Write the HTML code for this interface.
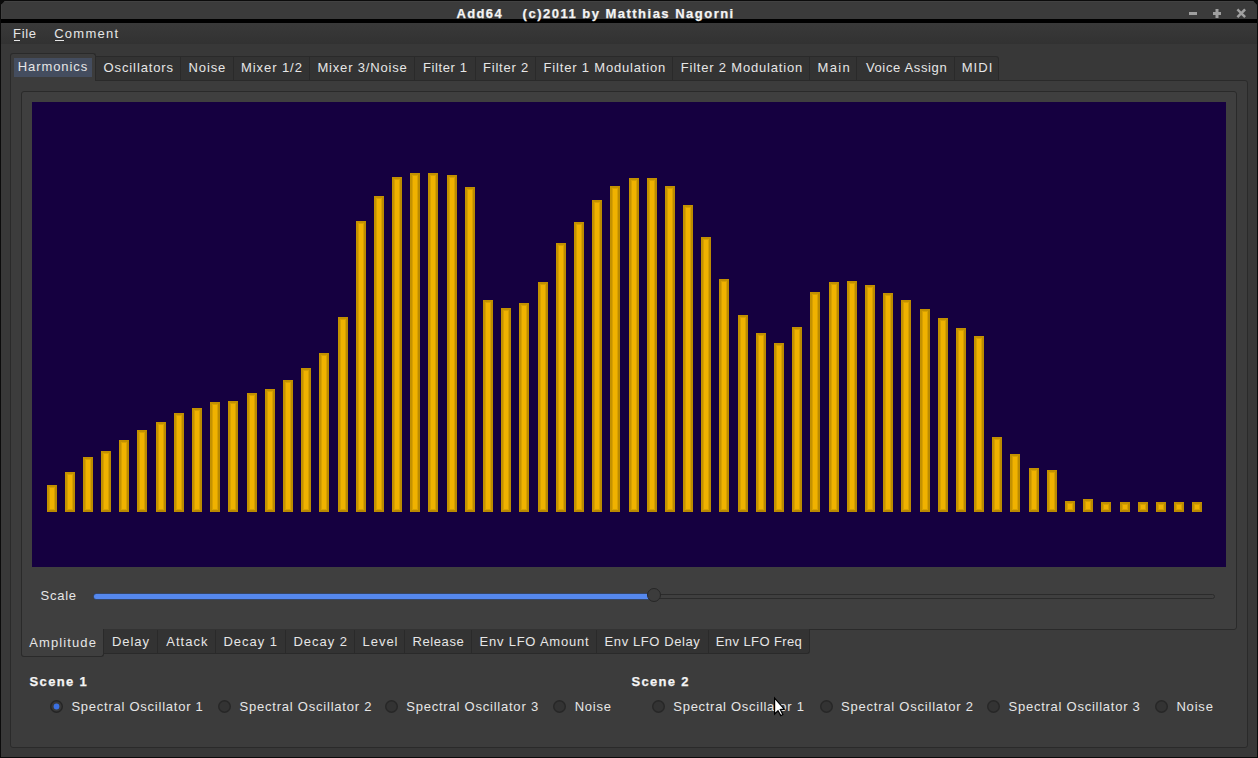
<!DOCTYPE html>
<html><head><meta charset="utf-8"><style>
*{box-sizing:border-box}
html,body{margin:0;padding:0;width:1258px;height:758px;overflow:hidden;background:#0b0b0b}
.abs{position:absolute}
.t{position:absolute;font-family:"Liberation Sans",sans-serif;font-size:13px;white-space:pre;line-height:normal}
#win{position:absolute;left:1px;top:1px;width:1256px;height:756px;background:#383838;clip-path:polygon(4px 0,1252px 0,1256px 4px,1256px 756px,0 756px,0 4px);overflow:hidden}
#title{position:absolute;left:0;top:0;width:1256px;height:18px;background:#3b3b3b;border-top:1px solid #424242;border-left:1px solid #404040}
#tline{position:absolute;left:0;top:18px;width:1256px;height:4px;background:#000}
#menubar{position:absolute;left:0;top:22px;width:1256px;height:21px;background:linear-gradient(#393939,#323232)}
.ul{position:absolute;height:1px;background:#e6e6e6}
#pane{position:absolute;left:10px;top:80px;width:1238px;height:668px;background:#3c3c3c;border:1px solid #2a2a2a;border-radius:0 3px 3px 3px}
#seltab{position:absolute;left:10px;top:53px;width:86px;height:28px;background:#3c3c3c;border:1px solid #2a2a2a;border-bottom:none;border-radius:3px 3px 0 0}
#hl{position:absolute;left:14px;top:58px;width:78px;height:19px;background:#444d5f}
#tabbar{position:absolute;left:95px;top:56px;width:904px;height:25px;background:#333333;border:1px solid #2a2a2a;border-left:none;border-radius:0 3px 0 0}
.sep{position:absolute;width:1px;background:#2a2a2a}
#inner{position:absolute;left:21px;top:91px;width:1216px;height:539px;background:#3f3f3f;border:1px solid #2a2a2a;border-radius:3px 3px 3px 0}
#purple{position:absolute;left:32px;top:102px;width:1194px;height:465px;background:#150040}
.bar{position:absolute;width:10px;background:#f0b200;border:2px solid;border-color:#c29000 #bb8b00 #b98900 #c49200;box-shadow:inset 0 0 0 1px #d8a100}
#groove{position:absolute;left:94px;top:594px;width:1121px;height:5px;border-radius:3px;background:#3f3f3f;border:1px solid #2b2b2b}
#fill{position:absolute;left:94px;top:594px;width:560px;height:5px;border-radius:2.5px;background:#5588ee;box-shadow:0 0 0 0.6px #2d4f8e}
#handle{position:absolute;left:647px;top:588px;width:14px;height:14px;border-radius:50%;background:#3c3c3c;border:1px solid #262626}
#btabsel{position:absolute;left:21px;top:629px;width:83px;height:28px;background:#3f3f3f;border:1px solid #2a2a2a;border-top:none;border-radius:0 0 3px 3px}
#btabbar{position:absolute;left:103px;top:629px;width:707px;height:25px;background:#333333;border:1px solid #2a2a2a;border-left:none;border-top:none;border-radius:0 0 3px 0}
.radio{position:absolute;width:13px;height:13px;border-radius:50%;background:#353535;border:1px solid #2a2a2a}
.radio.on{background:#3a3a3a;border:2px solid #262626}
.dot{position:absolute;left:2px;top:2px;width:6px;height:6px;border-radius:50%;background:#3b6fe0}
</style></head><body>
<div id="win">
<div id="title"></div>
<div id="tline"></div>
<div id="menubar"></div>
</div>
<svg class="abs" style="left:0;top:0" width="1258" height="30">
<rect x="1189" y="12" width="8" height="3" fill="#a0a0a0"/>
<rect x="1213" y="12" width="8" height="3" fill="#a0a0a0"/><rect x="1215.5" y="9" width="3" height="9" fill="#a0a0a0"/>
<path d="M1238.3 10.3 L1244.2 16.2 M1244.2 10.3 L1238.3 16.2" stroke="#a0a0a0" stroke-width="2.5" stroke-linecap="square"/>
</svg>
<div class="ul" style="left:14px;top:40px;width:6px"></div>
<div class="ul" style="left:55px;top:40px;width:9px"></div>
<div id="pane"></div>
<div id="tabbar"></div>
<div class="sep" style="left:180px;top:57px;height:23px"></div>
<div class="sep" style="left:233px;top:57px;height:23px"></div>
<div class="sep" style="left:309px;top:57px;height:23px"></div>
<div class="sep" style="left:414px;top:57px;height:23px"></div>
<div class="sep" style="left:475px;top:57px;height:23px"></div>
<div class="sep" style="left:535px;top:57px;height:23px"></div>
<div class="sep" style="left:672px;top:57px;height:23px"></div>
<div class="sep" style="left:809px;top:57px;height:23px"></div>
<div class="sep" style="left:856px;top:57px;height:23px"></div>
<div class="sep" style="left:954px;top:57px;height:23px"></div>
<div id="seltab"></div>
<div id="hl"></div>
<div id="inner"></div>
<div id="purple"></div>
<div class="bar" style="left:47px;top:485px;height:27px"></div>
<div class="bar" style="left:65px;top:472px;height:40px"></div>
<div class="bar" style="left:83px;top:457px;height:55px"></div>
<div class="bar" style="left:101px;top:451px;height:61px"></div>
<div class="bar" style="left:119px;top:440px;height:72px"></div>
<div class="bar" style="left:137px;top:430px;height:82px"></div>
<div class="bar" style="left:156px;top:422px;height:90px"></div>
<div class="bar" style="left:174px;top:413px;height:99px"></div>
<div class="bar" style="left:192px;top:408px;height:104px"></div>
<div class="bar" style="left:210px;top:402px;height:110px"></div>
<div class="bar" style="left:228px;top:401px;height:111px"></div>
<div class="bar" style="left:247px;top:393px;height:119px"></div>
<div class="bar" style="left:265px;top:389px;height:123px"></div>
<div class="bar" style="left:283px;top:380px;height:132px"></div>
<div class="bar" style="left:301px;top:368px;height:144px"></div>
<div class="bar" style="left:319px;top:353px;height:159px"></div>
<div class="bar" style="left:338px;top:317px;height:195px"></div>
<div class="bar" style="left:356px;top:221px;height:291px"></div>
<div class="bar" style="left:374px;top:196px;height:316px"></div>
<div class="bar" style="left:392px;top:177px;height:335px"></div>
<div class="bar" style="left:410px;top:173px;height:339px"></div>
<div class="bar" style="left:428px;top:173px;height:339px"></div>
<div class="bar" style="left:447px;top:175px;height:337px"></div>
<div class="bar" style="left:465px;top:187px;height:325px"></div>
<div class="bar" style="left:483px;top:300px;height:212px"></div>
<div class="bar" style="left:501px;top:308px;height:204px"></div>
<div class="bar" style="left:519px;top:303px;height:209px"></div>
<div class="bar" style="left:538px;top:282px;height:230px"></div>
<div class="bar" style="left:556px;top:243px;height:269px"></div>
<div class="bar" style="left:574px;top:222px;height:290px"></div>
<div class="bar" style="left:592px;top:200px;height:312px"></div>
<div class="bar" style="left:610px;top:186px;height:326px"></div>
<div class="bar" style="left:629px;top:178px;height:334px"></div>
<div class="bar" style="left:647px;top:178px;height:334px"></div>
<div class="bar" style="left:665px;top:186px;height:326px"></div>
<div class="bar" style="left:683px;top:205px;height:307px"></div>
<div class="bar" style="left:701px;top:237px;height:275px"></div>
<div class="bar" style="left:719px;top:279px;height:233px"></div>
<div class="bar" style="left:738px;top:315px;height:197px"></div>
<div class="bar" style="left:756px;top:333px;height:179px"></div>
<div class="bar" style="left:774px;top:343px;height:169px"></div>
<div class="bar" style="left:792px;top:327px;height:185px"></div>
<div class="bar" style="left:810px;top:292px;height:220px"></div>
<div class="bar" style="left:829px;top:282px;height:230px"></div>
<div class="bar" style="left:847px;top:281px;height:231px"></div>
<div class="bar" style="left:865px;top:285px;height:227px"></div>
<div class="bar" style="left:883px;top:293px;height:219px"></div>
<div class="bar" style="left:901px;top:300px;height:212px"></div>
<div class="bar" style="left:920px;top:309px;height:203px"></div>
<div class="bar" style="left:938px;top:318px;height:194px"></div>
<div class="bar" style="left:956px;top:328px;height:184px"></div>
<div class="bar" style="left:974px;top:336px;height:176px"></div>
<div class="bar" style="left:992px;top:437px;height:75px"></div>
<div class="bar" style="left:1010px;top:454px;height:58px"></div>
<div class="bar" style="left:1029px;top:468px;height:44px"></div>
<div class="bar" style="left:1047px;top:470px;height:42px"></div>
<div class="bar" style="left:1065px;top:501px;height:11px"></div>
<div class="bar" style="left:1083px;top:499px;height:13px"></div>
<div class="bar" style="left:1101px;top:502px;height:10px"></div>
<div class="bar" style="left:1120px;top:502px;height:10px"></div>
<div class="bar" style="left:1138px;top:502px;height:10px"></div>
<div class="bar" style="left:1156px;top:502px;height:10px"></div>
<div class="bar" style="left:1174px;top:502px;height:10px"></div>
<div class="bar" style="left:1192px;top:502px;height:10px"></div>
<div id="groove"></div>
<div id="fill"></div>
<div id="handle"></div>
<div id="btabbar"></div>
<div class="sep" style="left:157px;top:630px;height:23px"></div>
<div class="sep" style="left:215px;top:630px;height:23px"></div>
<div class="sep" style="left:285px;top:630px;height:23px"></div>
<div class="sep" style="left:354px;top:630px;height:23px"></div>
<div class="sep" style="left:404px;top:630px;height:23px"></div>
<div class="sep" style="left:471px;top:630px;height:23px"></div>
<div class="sep" style="left:596px;top:630px;height:23px"></div>
<div class="sep" style="left:708px;top:630px;height:23px"></div>
<div id="btabsel"></div>
<svg class="abs" style="left:50px;top:700px" width="13" height="13"><circle cx="6.5" cy="6.5" r="5.8" fill="#393939" stroke="#252525" stroke-width="1.4"/><circle cx="6.5" cy="6.5" r="2.9" fill="#3b70e2"/></svg>
<svg class="abs" style="left:218px;top:700px" width="13" height="13"><circle cx="6.5" cy="6.5" r="5.8" fill="#333333" stroke="#272727" stroke-width="1.4"/></svg>
<svg class="abs" style="left:385px;top:700px" width="13" height="13"><circle cx="6.5" cy="6.5" r="5.8" fill="#333333" stroke="#272727" stroke-width="1.4"/></svg>
<svg class="abs" style="left:553px;top:700px" width="13" height="13"><circle cx="6.5" cy="6.5" r="5.8" fill="#333333" stroke="#272727" stroke-width="1.4"/></svg>
<svg class="abs" style="left:652px;top:700px" width="13" height="13"><circle cx="6.5" cy="6.5" r="5.8" fill="#333333" stroke="#272727" stroke-width="1.4"/></svg>
<svg class="abs" style="left:820px;top:700px" width="13" height="13"><circle cx="6.5" cy="6.5" r="5.8" fill="#333333" stroke="#272727" stroke-width="1.4"/></svg>
<svg class="abs" style="left:987px;top:700px" width="13" height="13"><circle cx="6.5" cy="6.5" r="5.8" fill="#333333" stroke="#272727" stroke-width="1.4"/></svg>
<svg class="abs" style="left:1155px;top:700px" width="13" height="13"><circle cx="6.5" cy="6.5" r="5.8" fill="#333333" stroke="#272727" stroke-width="1.4"/></svg>
<span class="t" style="left:456.4px;top:6px;letter-spacing:1.400px;font-weight:700;color:#f4f4f4;-webkit-text-stroke:0.25px #f4f4f4;">Add64</span>
<span class="t" style="left:522.6px;top:6px;letter-spacing:1.488px;font-weight:700;color:#f4f4f4;-webkit-text-stroke:0.25px #f4f4f4;">(c)2011 by Matthias Nagorni</span>
<span class="t" style="left:13.1px;top:26px;letter-spacing:0.667px;font-weight:400;color:#e6e6e6;">File</span>
<span class="t" style="left:54.2px;top:26px;letter-spacing:1.267px;font-weight:400;color:#e6e6e6;">Comment</span>
<span class="t" style="left:17.8px;top:59px;letter-spacing:0.912px;font-weight:400;color:#e6e6e6;">Harmonics</span>
<span class="t" style="left:103.6px;top:60px;letter-spacing:0.880px;font-weight:400;color:#e6e6e6;">Oscillators</span>
<span class="t" style="left:188.6px;top:60px;letter-spacing:0.850px;font-weight:400;color:#e6e6e6;">Noise</span>
<span class="t" style="left:241.0px;top:60px;letter-spacing:0.925px;font-weight:400;color:#e6e6e6;">Mixer 1/2</span>
<span class="t" style="left:317.4px;top:60px;letter-spacing:0.833px;font-weight:400;color:#e6e6e6;">Mixer 3/Noise</span>
<span class="t" style="left:423.0px;top:60px;letter-spacing:0.600px;font-weight:400;color:#e6e6e6;">Filter 1</span>
<span class="t" style="left:483.0px;top:60px;letter-spacing:0.800px;font-weight:400;color:#e6e6e6;">Filter 2</span>
<span class="t" style="left:543.6px;top:60px;letter-spacing:0.817px;font-weight:400;color:#e6e6e6;">Filter 1 Modulation</span>
<span class="t" style="left:680.7px;top:60px;letter-spacing:0.811px;font-weight:400;color:#e6e6e6;">Filter 2 Modulation</span>
<span class="t" style="left:817.6px;top:60px;letter-spacing:1.333px;font-weight:400;color:#e6e6e6;">Main</span>
<span class="t" style="left:865.9px;top:60px;letter-spacing:0.645px;font-weight:400;color:#e6e6e6;">Voice Assign</span>
<span class="t" style="left:961.7px;top:60px;letter-spacing:1.100px;font-weight:400;color:#e6e6e6;">MIDI</span>
<span class="t" style="left:40.6px;top:588px;letter-spacing:0.725px;font-weight:400;color:#e6e6e6;">Scale</span>
<span class="t" style="left:29.3px;top:635px;letter-spacing:1.100px;font-weight:400;color:#e6e6e6;">Amplitude</span>
<span class="t" style="left:111.9px;top:634px;letter-spacing:0.975px;font-weight:400;color:#e6e6e6;">Delay</span>
<span class="t" style="left:166.2px;top:634px;letter-spacing:1.040px;font-weight:400;color:#e6e6e6;">Attack</span>
<span class="t" style="left:223.5px;top:634px;letter-spacing:0.950px;font-weight:400;color:#e6e6e6;">Decay 1</span>
<span class="t" style="left:293.5px;top:634px;letter-spacing:0.967px;font-weight:400;color:#e6e6e6;">Decay 2</span>
<span class="t" style="left:362.5px;top:634px;letter-spacing:0.975px;font-weight:400;color:#e6e6e6;">Level</span>
<span class="t" style="left:412.5px;top:634px;letter-spacing:0.583px;font-weight:400;color:#e6e6e6;">Release</span>
<span class="t" style="left:479.6px;top:634px;letter-spacing:0.762px;font-weight:400;color:#e6e6e6;">Env LFO Amount</span>
<span class="t" style="left:604.6px;top:634px;letter-spacing:0.592px;font-weight:400;color:#e6e6e6;">Env LFO Delay</span>
<span class="t" style="left:715.8px;top:634px;letter-spacing:0.400px;font-weight:400;color:#e6e6e6;">Env LFO Freq</span>
<span class="t" style="left:29.6px;top:674px;letter-spacing:1.350px;font-weight:700;color:#f4f4f4;-webkit-text-stroke:0.25px #f4f4f4;">Scene 1</span>
<span class="t" style="left:631.5px;top:674px;letter-spacing:1.317px;font-weight:700;color:#f4f4f4;-webkit-text-stroke:0.25px #f4f4f4;">Scene 2</span>
<span class="t" style="left:71.4px;top:699px;letter-spacing:0.755px;font-weight:400;color:#e6e6e6;">Spectral Oscillator 1</span>
<span class="t" style="left:239.6px;top:699px;letter-spacing:0.775px;font-weight:400;color:#e6e6e6;">Spectral Oscillator 2</span>
<span class="t" style="left:406.2px;top:699px;letter-spacing:0.780px;font-weight:400;color:#e6e6e6;">Spectral Oscillator 3</span>
<span class="t" style="left:574.7px;top:699px;letter-spacing:0.775px;font-weight:400;color:#e6e6e6;">Noise</span>
<span class="t" style="left:673.3px;top:699px;letter-spacing:0.715px;font-weight:400;color:#e6e6e6;">Spectral Oscillator 1</span>
<span class="t" style="left:841.0px;top:699px;letter-spacing:0.785px;font-weight:400;color:#e6e6e6;">Spectral Oscillator 2</span>
<span class="t" style="left:1008.5px;top:699px;letter-spacing:0.750px;font-weight:400;color:#e6e6e6;">Spectral Oscillator 3</span>
<span class="t" style="left:1176.4px;top:699px;letter-spacing:0.825px;font-weight:400;color:#e6e6e6;">Noise</span>
<svg class="abs" style="left:770px;top:694px" width="20" height="26" viewBox="0 0 20 26">
<path d="M4.6 4.2 L4.6 20 L8 16.8 L10.8 21.6 L12.8 20.6 L10.3 15.6 L14.3 15.2 Z" fill="#fff" stroke="#000" stroke-width="1.2" stroke-linejoin="miter"/>
</svg>
</body></html>
